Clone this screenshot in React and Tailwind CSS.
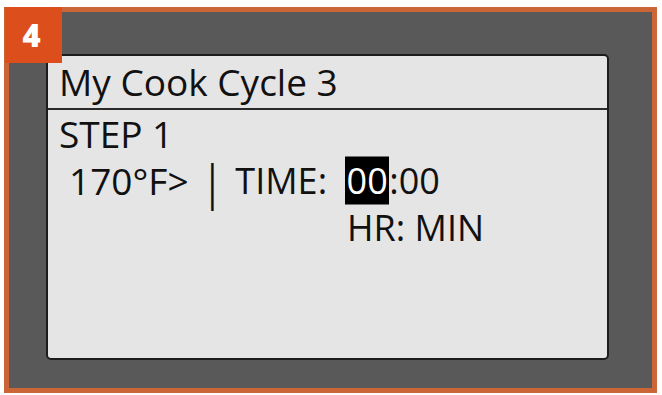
export default function App() {
  return (
    <div
      className="relative w-[662px] h-[395px] bg-white overflow-hidden"
      style={{ fontFamily: '"Open Sans", "Noto Sans", sans-serif' }}
    >
      {/* Frame */}
      <div className="ml-[4px] mt-[7px] w-[653px] h-[386px] border-[5px] border-[#cb6538] bg-[#595959] flex pl-[37px] pt-[42px] pr-[43px] pb-[28px]">
        {/* LCD panel */}
        <div className="flex-1 bg-[#e5e5e5] border-2 border-[#1c1c1c] rounded-[5px] text-[#111] text-[36px] leading-[47px]">
          <div className="pl-[11px] pt-[2px] pb-[3px] border-b-2 border-[#2a2a2a] text-[37px]">
            My Cook Cycle 3
          </div>
          <div className="pl-[11px]">
            <div className="text-[37px]">STEP 1</div>
            <div className="flex items-start ml-[10px] h-[47px]">
              <span className="text-[37px]">170°F&gt;</span>
              <span className="ml-[14px] scale-y-[1.3] translate-y-[2px]">|</span>
              <span className="ml-[13px]">TIME:</span>
              <span className="ml-[18px] h-[48px] bg-black text-white px-[1.5px] -translate-y-[0.5px]">00</span>
              <span>:00</span>
            </div>
            <div className="ml-[288px]">HR: MIN</div>
          </div>
        </div>
      </div>

      {/* Step badge */}
      <div className="absolute left-[5px] top-[7px] w-[57px] h-[56px] bg-[#dc4f1c] flex items-center justify-center pr-[4px]">
        <span className="text-white text-[31px] font-extrabold leading-none">4</span>
      </div>
    </div>
  );
}
